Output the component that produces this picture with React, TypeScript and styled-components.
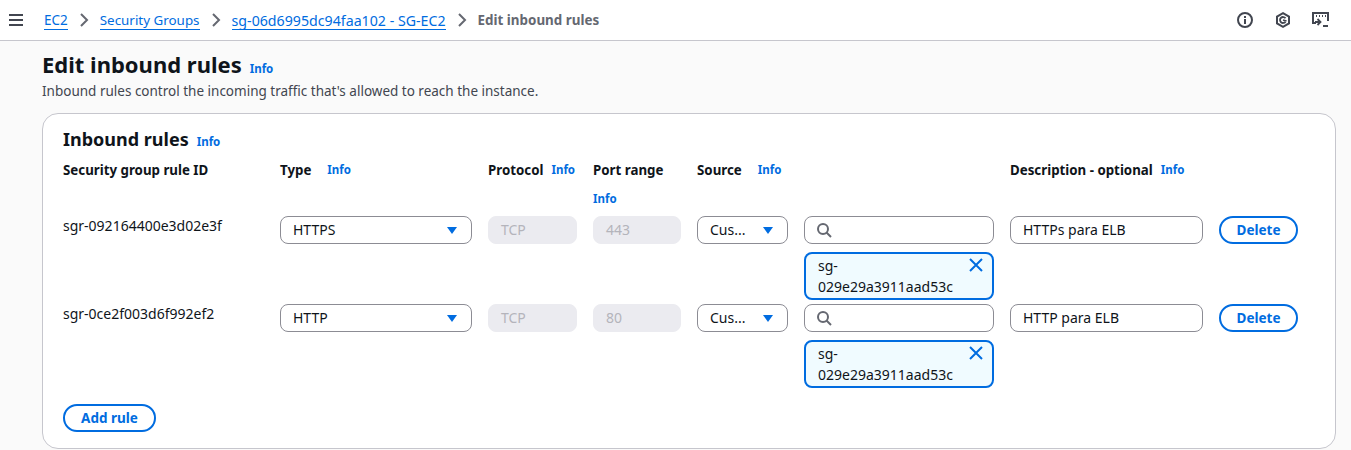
import React from "react";
import styled, { createGlobalStyle } from "styled-components";

const Global = createGlobalStyle`
  html, body { margin: 0; padding: 0; background: #fafafa; height: 450px; overflow: hidden; }
  body { font-family: "Noto Sans", "Open Sans", sans-serif; font-size: 14px; color: #0f141a; }
  * { box-sizing: border-box; }
`;

const TopBar = styled.header`
  display: flex; align-items: center; height: 41px; background: #fff;
  border-bottom: 1px solid #c6c6cd; padding: 0 21px 0 8px;
`;
const Menu = styled.span`display: flex; width: 36px; color: #424650;`;
const Crumbs = styled.nav`display: flex; align-items: center; flex: 1; font-size: 14px; line-height: 20px;`;
const CrumbLink = styled.a<{ $size: number }>`
  color: #006ce0; border-bottom: 1px solid #006ce0; line-height: 17px; margin-top: 1px; white-space: nowrap;
  font-size: ${p => p.$size}px;
`;
const Sep = styled.span`display: flex; width: 32px; justify-content: center; color: #656871;`;
const Current = styled.span`font-weight: 700; color: #656871; font-size: 13.4px; white-space: nowrap;`;
const Tools = styled.div`display: flex; gap: 19px; color: #424650;`;
const ToolIcon = styled.span`display: flex; width: 19px; justify-content: center;`;

const Main = styled.main`padding: 8px 15px 0 42px;`;
const TitleRow = styled.div`display: flex; align-items: baseline; gap: 8px; height: 30px;`;
const Title = styled.h1`margin: 0; font-size: 22px; line-height: 30px; font-weight: 700;`;
const Info = styled.a`color: #006ce0; font-size: 11.5px; line-height: 16px; font-weight: 700;`;
const Sub = styled.p`margin: 2px 0 12px; font-size: 13.5px; line-height: 20px; color: #424650;`;

const Card = styled.section`
  height: 336px; background: #fff; border: 1px solid #c6c6cd; border-radius: 16px; padding: 12px 20px 0;
`;
const CardTitleRow = styled.div`display: flex; align-items: baseline; gap: 8px; height: 26px;`;
const CardTitle = styled.h2`margin: 0; font-size: 18px; line-height: 26px; font-weight: 700;`;

const Grid = styled.div`
  display: grid; margin-top: 8px;
  grid-template-columns: 201px 192px 89px 88px 91px 190px 193px 79px;
  column-gap: 16px;
`;
const Head = styled.div<{ $gap?: number }>`
  display: flex; flex-wrap: wrap; column-gap: ${p => p.$gap ?? 8}px; height: 56px; align-content: flex-start; font-size: 13.3px;
  font-weight: 700; line-height: 20px;
  ${Info} { line-height: 20px; }
`;
const InfoWrap = styled(Info)`margin-top: 9px; flex-basis: 100%;`;
const RuleId = styled.div`font-size: 14px; line-height: 20px;`;
const Cell = styled.div`display: flex; flex-direction: column; gap: 8px; height: 88px;`;

const Field = styled.div<{ $disabled?: boolean }>`
  display: flex; align-items: center; justify-content: space-between; height: 28px; border-radius: 8px;
  padding: 0 12px; font-size: 14px; white-space: nowrap;
  border: 1px solid ${p => (p.$disabled ? "#ebebf0" : "#8c8c94")};
  background: ${p => (p.$disabled ? "#ebebf0" : "#fff")};
  color: ${p => (p.$disabled ? "#b4b4bb" : "#0f141a")};
`;
const FieldText = styled.span`margin-top: -2px;`;
const SearchField = styled(Field)`justify-content: flex-start; gap: 8px;`;
const Caret = styled.span`
  width: 0; height: 0; border-left: 5px solid transparent; border-right: 5px solid transparent;
  border-top: 7px solid #006ce0; margin-right: 2px;
`;
const Token = styled.div`
  position: relative; height: 48px; border: 2px solid #006ce0; border-radius: 8px; background: #f0fbff;
  padding: 1px 28px 0 12px; font-size: 14px; line-height: 21px;
`;
const TokenClose = styled.span`position: absolute; top: 3px; right: 8px; display: flex; color: #006ce0;`;
const Pill = styled.button`
  height: 28px; border: 2px solid #006ce0; border-radius: 20px; background: #fff; color: #006ce0;
  font: 700 13.5px/20px "Noto Sans", sans-serif; padding: 0;
`;
const AddPill = styled(Pill)`width: 93px; margin-top: 12px; display: block;`;

const Chevron = () => (
  <Sep>
    <svg width="16" height="16" viewBox="0 0 16 16" fill="none" stroke="currentColor" strokeWidth="2">
      <path d="M5 2l6 6-6 6" />
    </svg>
  </Sep>
);

const Search = () => (
  <svg width="16" height="16" viewBox="0 0 16 16" fill="none" stroke="#656871" strokeWidth="2" style={{ flex: "none", marginLeft: -1 }}>
    <circle cx="7" cy="7" r="5" />
    <path d="M10.5 10.5L15 15" />
  </svg>
);

const rows = [
  { id: "sgr-092164400e3d02e3f", type: "HTTPS", port: "443", desc: "HTTPs para ELB" },
  { id: "sgr-0ce2f003d6f992ef2", type: "HTTP", port: "80", desc: "HTTP para ELB" },
];

export default function App() {
  return (
    <>
      <Global />
      <TopBar>
        <Menu>
          <svg width="16" height="16" viewBox="0 0 16 16" stroke="currentColor" strokeWidth="2">
            <path d="M1 3h14M1 8h14M1 13h14" />
          </svg>
        </Menu>
        <Crumbs>
          <CrumbLink $size={13.5}>EC2</CrumbLink>
          <Chevron />
          <CrumbLink $size={13.4}>Security Groups</CrumbLink>
          <Chevron />
          <CrumbLink $size={14.2}>sg-06d6995dc94faa102 - SG-EC2</CrumbLink>
          <Chevron />
          <Current>Edit inbound rules</Current>
        </Crumbs>
        <Tools>
          <ToolIcon>
            <svg width="16" height="16" viewBox="0 0 16 16" fill="none" stroke="currentColor" strokeWidth="2">
              <circle cx="8" cy="8" r="7" />
              <path d="M8 7v5M8 4v2" />
            </svg>
          </ToolIcon>
          <ToolIcon>
            <svg width="16" height="16" viewBox="0 0 16 16" fill="none" stroke="currentColor" strokeWidth="2">
              <path d="M8 1.2l6 3.4v6.8L8 14.8l-6-3.4V4.6z" />
              <path d="M10.5 6.3A3 3 0 1 0 10.5 9.7" strokeWidth="1.8" />
              <path d="M8 8l3.5 1" strokeWidth="1.8" />
            </svg>
          </ToolIcon>
          <ToolIcon>
            <svg width="17" height="16" viewBox="0 0 17 16" fill="none" stroke="currentColor" strokeWidth="2">
              <path d="M4 11H1V1h15v8" />
              <path d="M4 4h1M7 4h1M10 4h1M13 4h1" />
              <path d="M5.5 7l3 3-3 3M3 10h5M11 14h5" strokeWidth="1.8" />
            </svg>
          </ToolIcon>
        </Tools>
      </TopBar>
      <Main>
        <TitleRow>
          <Title>Edit inbound rules</Title>
          <Info>Info</Info>
        </TitleRow>
        <Sub>Inbound rules control the incoming traffic that's allowed to reach the instance.</Sub>
        <Card>
          <CardTitleRow>
            <CardTitle>Inbound rules</CardTitle>
            <Info>Info</Info>
          </CardTitleRow>
          <Grid>
            <Head>Security group rule ID</Head>
            <Head $gap={16}>Type <Info>Info</Info></Head>
            <Head>Protocol <Info>Info</Info></Head>
            <Head>Port range <InfoWrap>Info</InfoWrap></Head>
            <Head $gap={16}>Source <Info>Info</Info></Head>
            <Head />
            <Head>Description - optional <Info>Info</Info></Head>
            <Head />
            {rows.map(r => (
              <React.Fragment key={r.id}>
                <RuleId>{r.id}</RuleId>
                <Cell>
                  <Field><FieldText>{r.type}</FieldText><Caret /></Field>
                </Cell>
                <Cell><Field $disabled><FieldText>TCP</FieldText></Field></Cell>
                <Cell><Field $disabled><FieldText>{r.port}</FieldText></Field></Cell>
                <Cell><Field><FieldText>Cus...</FieldText><Caret /></Field></Cell>
                <Cell>
                  <SearchField><Search /></SearchField>
                  <Token>
                    sg-<br />029e29a3911aad53c
                    <TokenClose>
                      <svg width="16" height="16" viewBox="0 0 16 16" fill="none" stroke="currentColor" strokeWidth="2">
                        <path d="M2 2l12 12M14 2L2 14" />
                      </svg>
                    </TokenClose>
                  </Token>
                </Cell>
                <Cell><Field><FieldText>{r.desc}</FieldText></Field></Cell>
                <Cell><Pill>Delete</Pill></Cell>
              </React.Fragment>
            ))}
          </Grid>
          <AddPill>Add rule</AddPill>
        </Card>
      </Main>
    </>
  );
}
